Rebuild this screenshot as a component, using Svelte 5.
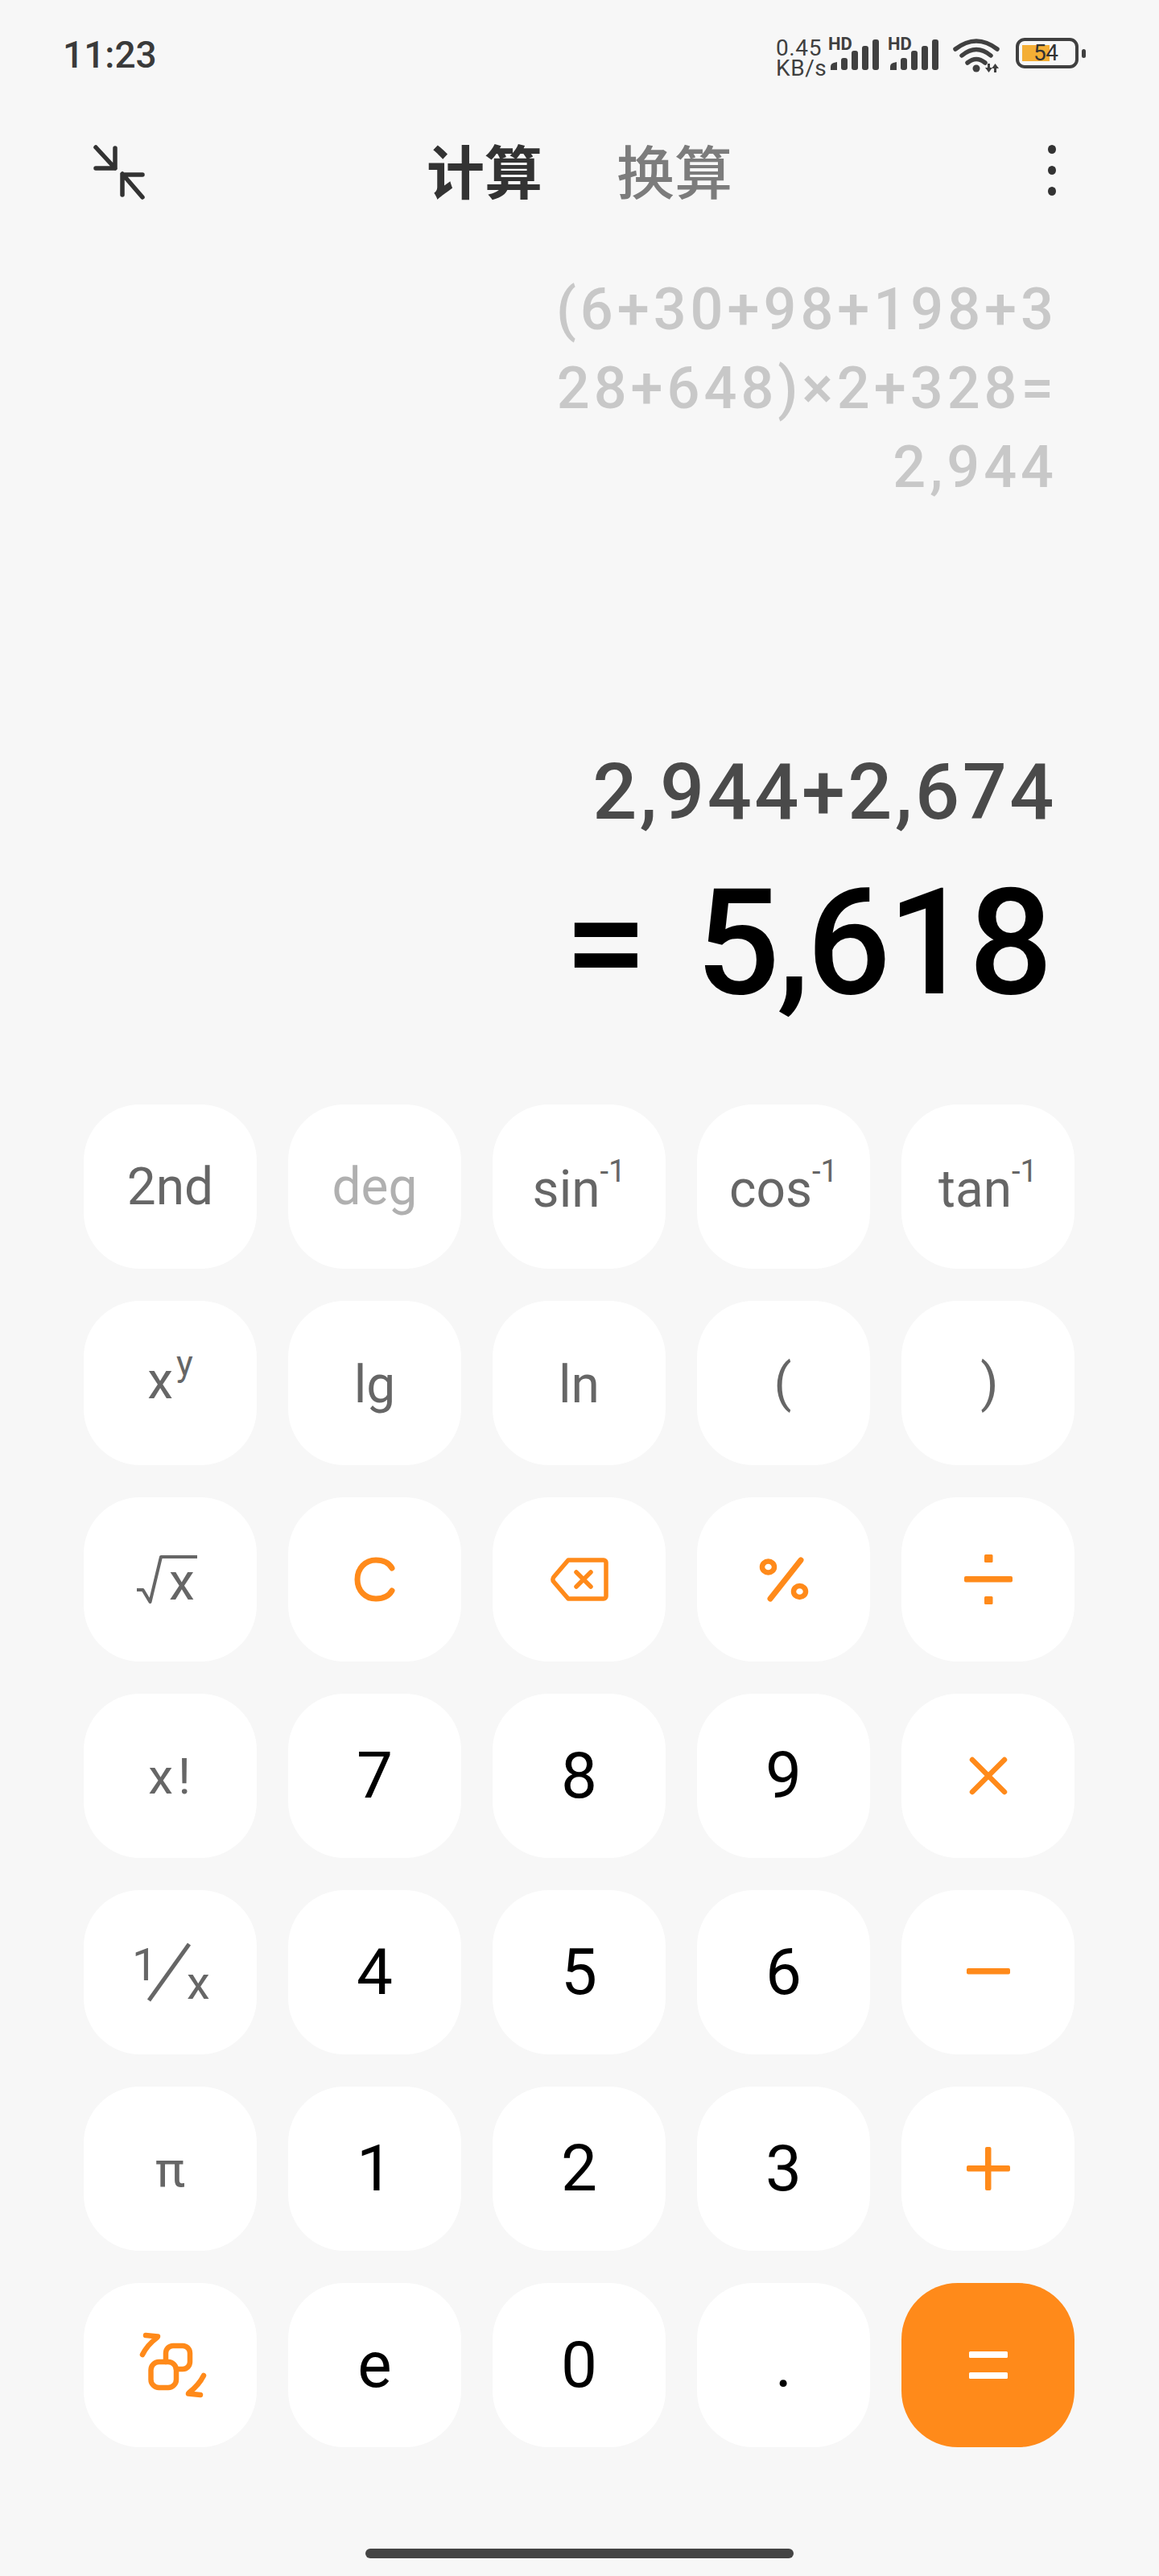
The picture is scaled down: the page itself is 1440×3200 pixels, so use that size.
<script>
  const keys = [
    { t: '2nd', c: 'sci' }, { t: 'deg', c: 'sci off' }, { t: 'sin', s: '-1', c: 'sci trig' }, { t: 'cos', s: '-1', c: 'sci trig' }, { t: 'tan', s: '-1', c: 'sci trig' },
    { t: 'x', s: 'y', c: 'sci power' }, { t: 'lg', c: 'sci low' }, { t: 'ln', c: 'sci low' }, { t: '(', c: 'sci lp' }, { t: ')', c: 'sci rp' },
    { i: 'root', c: 'sci' }, { i: 'clear', c: 'op' }, { i: 'back', c: 'op' }, { i: 'pct', c: 'op' }, { i: 'div', c: 'op' },
    { t: 'x!', c: 'sci fact' }, { t: '7' }, { t: '8' }, { t: '9' }, { i: 'times', c: 'op' },
    { i: 'inv', c: 'sci' }, { t: '4' }, { t: '5' }, { t: '6' }, { i: 'minus', c: 'op' },
    { t: 'π', c: 'sci pi' }, { t: '1' }, { t: '2' }, { t: '3' }, { i: 'plus', c: 'op' },
    { i: 'mode', c: 'op' }, { t: 'e' }, { t: '0' }, { t: '.' }, { i: 'eq', c: 'eq' }
  ];
</script>

<div class="screen">
  <header class="status">
    <span class="time">11:23</span>
    <div class="indicators">
      <div class="speed"><span>0.45</span><span>KB/s</span></div>
      {#each [0, 1] as n}
        <div class="signal">
          <span class="hd">HD</span>
          <svg width="60" height="40" viewBox="0 0 60 40" fill="#404040">
            <path d="M0 38V34q0-4 4-5l4-1V38z" />
            <rect x="13" y="23" width="8" height="15" rx="3" />
            <rect x="26" y="14" width="8" height="24" rx="3" />
            <rect x="39" y="8" width="8" height="30" rx="3" />
            <rect x="52" y="0" width="8" height="38" rx="3" />
          </svg>
        </div>
      {/each}
      <svg class="wifi" width="58" height="44" viewBox="0 0 58 44" fill="none" stroke="#404040" stroke-width="5.5" stroke-linecap="round">
        <path d="M3 15Q29-5 55 15" />
        <path d="M11 23Q29 8 47 23" />
        <path d="M18 32Q29 23 40 32" />
        <circle cx="29" cy="39" r="4.5" fill="#404040" stroke="none" />
        <path d="M43 33h3v5h3l-4.500 6-4.500-6h3zM51 44h3v-5h3l-4.500-6-4.500 6h3z" fill="#404040" stroke="none" />
      </svg>
      <div class="battery"><i></i><b>54</b></div>
    </div>
  </header>

  <nav class="nav">
    <svg class="collapse" width="68" height="68" viewBox="0 0 68 68" fill="none" stroke="#333" stroke-width="5.5" stroke-linecap="round" stroke-linejoin="round">
      <path d="M5 4 29 30M29 5V30H5" />
      <path d="M63 66 38 37M38 63V38H63" />
    </svg>
    <div class="tabs"><span class="active">计算</span><span>换算</span></div>
    <div class="more"><i></i><i></i><i></i></div>
  </nav>

  <section class="display">
    <div class="history">
      <span>(6+30+98+198+3</span>
      <span>28+648)×2+328=</span>
      <span>2,944</span>
    </div>
    <div class="expr">2,944+2,674</div>
    <div class="result"><span class="sign">=</span><span class="value">5,618</span></div>
  </section>

  <section class="keypad">
    {#each keys as k}
      <button class={'key ' + (k.c ?? 'num')}>
        {#if k.i === 'root'}
          <svg class="shift-left" width="76" height="60" viewBox="0 0 76 60" fill="none">
            <path d="M0 43H7.500L16.500 58 30 2H75" stroke="#666" stroke-width="4" stroke-linejoin="round" />
            <text x="40" y="55" class="svgtext" font-size="64">x</text>
          </svg>
        {:else if k.i === 'clear'}
          <svg width="50" height="54" viewBox="0 0 50 54" fill="none" stroke="#ff8a1a" stroke-width="7" stroke-linecap="round">
            <path d="M46 13C42 6 35 3 26 3 13 3 3 13 3 27s10 24 23 24c9 0 16-3 20-10" />
          </svg>
        {:else if k.i === 'back'}
          <svg width="72" height="54" viewBox="0 0 72 54" fill="none" stroke="#ff8a1a" stroke-width="5.500" stroke-linecap="round" stroke-linejoin="round">
            <path d="M22 3H66a3 3 0 0 1 3 3V48a3 3 0 0 1-3 3H22L4 30a4.500 4.500 0 0 1 0-6Z" />
            <path d="M32 18 50 36M50 18 32 36" />
          </svg>
        {:else if k.i === 'pct'}
          <svg width="60" height="52" viewBox="0 0 60 52" fill="none" stroke="#ff8a1a" stroke-width="6.500">
            <ellipse cx="10.500" cy="10.500" rx="7.500" ry="7" />
            <ellipse cx="49.500" cy="41" rx="7.500" ry="7" />
            <path d="M13 50 51 2" stroke-width="7" stroke-linecap="round" />
          </svg>
        {:else if k.i === 'div'}
          <svg width="60" height="62" viewBox="0 0 60 62" fill="#ff8a1a">
            <rect x="0" y="27" width="60" height="7.500" rx="2" />
            <rect x="25" y="0" width="10.500" height="10" rx="1.500" />
            <rect x="25" y="52" width="10.500" height="10" rx="1.500" />
          </svg>
        {:else if k.i === 'times'}
          <svg width="46" height="46" viewBox="0 0 46 46" fill="none" stroke="#ff8a1a" stroke-width="6.500" stroke-linecap="round">
            <path d="M3 3 43 43M43 3 3 43" />
          </svg>
        {:else if k.i === 'inv'}
          <svg width="96" height="72" viewBox="0 0 96 72" fill="none">
            <text x="0" y="46" class="svgtext" font-size="56">1</text>
            <path d="M21 71 71 1" stroke="#666" stroke-width="5" />
            <text x="68" y="69" class="svgtext" font-size="58">x</text>
          </svg>
        {:else if k.i === 'minus'}
          <svg class="shift-up" width="54" height="8" viewBox="0 0 54 8" fill="#ff8a1a"><rect width="54" height="7.500" rx="2" /></svg>
        {:else if k.i === 'plus'}
          <svg width="54" height="54" viewBox="0 0 54 54" fill="#ff8a1a">
            <rect x="0" y="23" width="54" height="7.500" rx="2" />
            <rect x="23" y="0" width="7.500" height="54" rx="2" />
          </svg>
        {:else if k.i === 'eq'}
          <svg width="48" height="34" viewBox="0 0 48 34" fill="#fff">
            <rect width="48" height="8" rx="1.500" />
            <rect y="26" width="48" height="8" rx="1.500" />
          </svg>
        {:else if k.i === 'mode'}
          <svg class="shift-right" width="84" height="80" viewBox="0 0 84 80" fill="none" stroke="#ff8a1a" stroke-width="6.500" stroke-linecap="round">
            <rect x="14.500" y="36" width="31.500" height="32" rx="10" />
            <path d="M33 36V25a9 9 0 0 1 9-9H54a9 9 0 0 1 9 9V36a9 9 0 0 1-9 9H46" />
            <path d="M4 27Q10 15 22 6M8 3 23 4.500" />
            <path d="M80 53Q74 65 62 74M76 77 61 75.500" />
          </svg>
        {:else}
          <span class="label">{k.t}</span>{#if k.s}<sup>{k.s}</sup>{/if}
        {/if}
      </button>
    {/each}
  </section>

  <div class="home"></div>
</div>

<style>
  :global(body) {
    margin: 0;
    background: #f7f7f7;
  }
  svg {
    overflow: visible;
  }
  .screen {
    width: 1440px;
    height: 3200px;
    display: flex;
    flex-direction: column;
    background: #f7f7f7;
    font-family: Roboto, "Noto Sans CJK SC", sans-serif;
    overflow: hidden;
  }
  .status {
    height: 134px;
    flex: none;
    box-sizing: border-box;
    padding: 40px 91px 0 78px;
    display: flex;
    justify-content: space-between;
    align-items: flex-start;
  }
  .time {
    font-size: 46px;
    line-height: 56px;
    color: #3a3a3a;
    font-weight: 500;
  }
  .indicators {
    display: flex;
    align-items: flex-start;
    margin-top: 7px;
  }
  .speed {
    display: flex;
    flex-direction: column;
    width: 60px;
    font-size: 28px;
    line-height: 25px;
    color: #404040;
    margin-right: 8px;
    letter-spacing: 0.6px;
  }
  .signal {
    position: relative;
    width: 60px;
    height: 40px;
    margin-right: 14px;
  }
  .signal svg {
    position: absolute;
    left: 0;
    top: 2px;
  }
  .hd {
    position: absolute;
    left: -3px;
    top: -3px;
    font-size: 22px;
    line-height: 22px;
    font-weight: 700;
    color: #404040;
  }
  .wifi {
    margin: -1px 20px 0 4px;
  }
  .battery {
    position: relative;
    width: 78px;
    height: 38px;
    box-sizing: border-box;
    border: 4px solid #404040;
    border-radius: 11px;
    margin-right: 9px;
  }
  .battery::after {
    content: '';
    position: absolute;
    right: -13px;
    top: 10px;
    width: 5px;
    height: 11px;
    border-radius: 3px;
    background: #404040;
  }
  .battery i {
    position: absolute;
    left: 4px;
    top: 5px;
    width: 34px;
    height: 20px;
    background: #f4ae35;
  }
  .battery b {
    position: absolute;
    left: 18px;
    top: 0;
    font-size: 28px;
    line-height: 30px;
    font-weight: 400;
    letter-spacing: -0.5px;
    color: #333;
  }
  .nav {
    height: 202px;
    flex: none;
    display: grid;
    grid-template-columns: 1fr auto 1fr;
    align-items: flex-start;
    padding: 0 128px 0 114px;
  }
  .collapse {
    margin-top: 45px;
  }
  .tabs {
    display: flex;
    gap: 92px;
    margin-left: 14px;
    margin-top: 42px;
    font-size: 72px;
    line-height: 82px;
    color: #7c7c7c;
    font-weight: 500;
  }
  .tabs .active {
    color: #333;
    font-weight: 700;
  }
  .more {
    justify-self: end;
    display: flex;
    flex-direction: column;
    gap: 15px;
    margin-top: 46px;
  }
  .more i {
    width: 10px;
    height: 11px;
    border-radius: 50%;
    background: #333;
  }
  .display {
    height: 1036px;
    flex: none;
    display: flex;
    flex-direction: column;
    align-items: flex-end;
    padding-right: 132px;
  }
  .history {
    display: flex;
    flex-direction: column;
    align-items: flex-end;
    font-size: 72px;
    line-height: 98px;
    font-weight: 500;
    color: #c8c8c8;
    letter-spacing: 5px;
    margin-right: -6px;
  }
  .expr {
    margin-top: 298px;
    margin-right: -5px;
    font-size: 97px;
    line-height: 112px;
    font-weight: 500;
    color: #4a4a4a;
    letter-spacing: 3.5px;
  }
  .result {
    margin-top: 23px;
    display: flex;
    gap: 60px;
    font-size: 184px;
    line-height: 216px;
    font-weight: 500;
    color: #000;
  }
  .value {
    letter-spacing: -4px;
    margin-right: 4px;
  }
  .keypad {
    flex: none;
    display: grid;
    grid-template-columns: repeat(5, 215px);
    grid-auto-rows: 204px;
    column-gap: 39px;
    row-gap: 40px;
    padding-left: 104px;
  }
  .key {
    border: 0;
    padding: 0;
    margin: 0;
    background: #fff;
    border-radius: 70px;
    display: flex;
    align-items: center;
    justify-content: center;
    font-family: inherit;
  }
  .num {
    font-size: 80px;
    color: #000;
  }
  .sci {
    font-size: 64px;
    color: #666;
  }
  .off {
    color: #b0b0b0;
  }
  .pi {
    font-size: 62px;
  }
  .fact {
    letter-spacing: 6px;
    font-size: 62px;
    padding-left: 4px;
  }
  .eq {
    background: #ff8a1a;
  }
  sup {
    font-size: 38px;
    line-height: 1;
    align-self: center;
    margin: -38px 0 0 2px;
  }
  .trig .label {
    margin-top: 6px;
  }
  .trig sup {
    margin-left: 0;
  }
  .power .label {
    margin-top: -6px;
  }
  .power sup {
    font-size: 44px;
    margin: -48px 0 0 4px;
  }
  .low .label {
    margin-top: 4px;
  }
  .lp {
    padding-right: 2px;
  }
  .rp {
    padding-left: 4px;
  }
  .svgtext {
    font-family: Roboto, sans-serif;
    fill: #666;
  }
  .shift-up {
    margin-top: -3px;
  }
  .shift-right {
    margin-left: 7px;
  }
  .shift-left {
    margin-right: 7px;
  }
  .home {
    width: 532px;
    height: 12px;
    flex: none;
    align-self: center;
    margin-top: 126px;
    border-radius: 6px;
    background: #444;
  }
</style>
